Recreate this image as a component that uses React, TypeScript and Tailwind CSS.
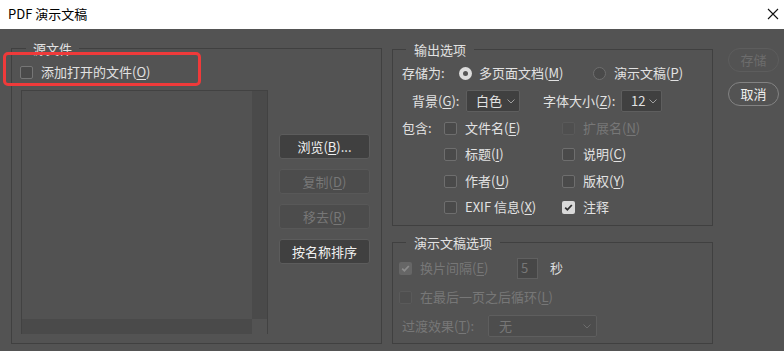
import React from "react";

const U = ({ c }: { c: string }) => (
  <span className="underline underline-offset-[2px] decoration-1">{c}</span>
);

const Check = ({
  checked = false,
  disabled = false,
  light = false,
}: {
  checked?: boolean;
  disabled?: boolean;
  light?: boolean;
}) => {
  if (checked && !disabled) {
    return (
      <span className="w-[13px] h-[13px] rounded-[2px] bg-[#d9d9d9] flex items-center justify-center shrink-0">
        <svg width="9" height="9" viewBox="0 0 9 9">
          <path d="M1.2 4.6 L3.4 6.8 L7.8 2" stroke="#2f2f2f" strokeWidth="1.8" fill="none" />
        </svg>
      </span>
    );
  }
  if (checked && disabled) {
    return (
      <span className="w-[13px] h-[13px] rounded-[2px] bg-[#666666] flex items-center justify-center shrink-0">
        <svg width="9" height="9" viewBox="0 0 9 9">
          <path d="M1.2 4.6 L3.4 6.8 L7.8 2" stroke="#8c8c8c" strokeWidth="1.8" fill="none" />
        </svg>
      </span>
    );
  }
  return (
    <span
      className={
        disabled
          ? "w-[13px] h-[13px] rounded-[2px] border border-[#5a5a5a] bg-[#4f4f4f] shrink-0"
          : light
          ? "w-[13px] h-[13px] rounded-[2px] border border-[#767676] bg-[#4a4a4a] shrink-0"
          : "w-[13px] h-[13px] rounded-[2px] border border-[#6e6e6e] bg-[#4a4a4a] shrink-0"
      }
    />
  );
};

const Radio = ({ on = false }: { on?: boolean }) =>
  on ? (
    <span className="w-[13px] h-[13px] rounded-full bg-[#dcdcdc] flex items-center justify-center shrink-0">
      <span className="w-[5px] h-[5px] rounded-full bg-[#555555]" />
    </span>
  ) : (
    <span className="w-[13px] h-[13px] rounded-full border border-[#6e6e6e] bg-[#4a4a4a] shrink-0" />
  );

const Chevron = ({ color }: { color: string }) => (
  <svg width="8" height="5" viewBox="0 0 8 5">
    <path d="M0.5 0.5 L4 4 L7.5 0.5" stroke={color} strokeWidth="1" fill="none" />
  </svg>
);

export default function App() {
  return (
    <div className="w-[784px] h-[351px] overflow-hidden font-['Noto_Sans_CJK_SC','Noto_Sans',sans-serif] text-[13px] leading-[18px] text-[#e2e2e2]">
      {/* Title bar */}
      <div className="h-[29px] bg-white flex items-center justify-between pl-[8px] pr-[4px] text-black">
        <span className="leading-[16px] -mt-[2px]">PDF 演示文稿</span>
        <svg width="12" height="12" viewBox="0 0 12 12" className="mr-[1px] -mt-[2px]">
          <path d="M1 1 L11 11 M11 1 L1 11" stroke="#111" strokeWidth="1.1" />
        </svg>
      </div>

      {/* Body */}
      <div className="relative flex h-[322px] bg-[#535353]">
        {/* Source group */}
        <div className="ml-[11px] mt-[19px] w-[371px] h-[296px] border border-[#404040] flex flex-col shrink-0">
          <div className="-mt-[10px] ml-[14px] w-fit px-[7px] h-[19px] leading-[19px] bg-[#535353]">源文件</div>
          <div className="mt-[5px] ml-[8px] h-[18px] flex items-center">
            <Check light />
            <span className="ml-[8px]">
              添加打开的文件(<U c="O" />)
            </span>
          </div>
          <div className="mt-[9px] ml-[9px] flex">
            <div className="w-[247px] h-[244px] border-t border-l border-r border-[#424242] grid grid-cols-[1fr_15px] grid-rows-[1fr_15px]">
              <div className="bg-[#525252]" />
              <div className="bg-[#4a4a4a]" />
              <div className="bg-[#4a4a4a]" />
              <div className="bg-[#535353]" />
            </div>
            <div className="ml-[11px] mt-[44px] flex flex-col gap-[10px]">
              <div className="w-[91px] h-[25px] rounded-[3px] border border-[#5c5c5c] bg-[#404040] flex items-center justify-center text-[#f0f0f0]">
                浏览(<U c="B" />)...
              </div>
              <div className="w-[91px] h-[25px] rounded-[3px] border border-[#585858] bg-[#4c4c4c] flex items-center justify-center text-[#777777]">
                复制(<U c="D" />)
              </div>
              <div className="w-[91px] h-[25px] rounded-[3px] border border-[#585858] bg-[#4c4c4c] flex items-center justify-center text-[#777777]">
                移去(<U c="R" />)
              </div>
              <div className="w-[91px] h-[25px] rounded-[3px] border border-[#5c5c5c] bg-[#404040] flex items-center justify-center text-[#f0f0f0]">
                按名称排序
              </div>
            </div>
          </div>
        </div>

        {/* Output column */}
        <div className="ml-[10px] mt-[20px] w-[321px] flex flex-col shrink-0">
          {/* Output options */}
          <div className="h-[177px] border border-[#404040] flex flex-col">
            <div className="-mt-[10px] ml-[13px] w-fit px-[8px] h-[19px] leading-[19px] bg-[#535353]">输出选项</div>
            <div className="mt-[3px] h-[22px] flex items-center pl-[9px]">
              <span className="w-[57px]">存储为:</span>
              <Radio on />
              <span className="ml-[7px] w-[114px]">
                多页面文档(<U c="M" />)
              </span>
              <Radio />
              <span className="ml-[8px]">
                演示文稿(<U c="P" />)
              </span>
            </div>
            <div className="mt-[6px] h-[22px] flex items-center pl-[19px]">
              <span className="w-[54px]">
                背景(<U c="G" />):
              </span>
              <div className="w-[54px] h-[22px] rounded-[2px] border border-[#5e5e5e] bg-[#404040] flex items-center justify-between pl-[9px] pr-[4px]">
                <span>白色</span>
                <Chevron color="#a0a0a0" />
              </div>
              <span className="ml-[23px] w-[78px]">
                字体大小(<U c="Z" />):
              </span>
              <div className="w-[41px] h-[22px] rounded-[2px] border border-[#5e5e5e] bg-[#404040] flex items-center justify-between pl-[9px] pr-[4px]">
                <span>12</span>
                <Chevron color="#a0a0a0" />
              </div>
            </div>
            <div className="mt-[6px] h-[20px] flex items-center pl-[9px]">
              <span className="w-[42px]">包含:</span>
              <div className="w-[118px] flex items-center">
                <Check />
                <span className="ml-[8px]">
                  文件名(<U c="E" />)
                </span>
              </div>
              <div className="flex items-center text-[#777777]">
                <Check disabled />
                <span className="ml-[8px]">
                  扩展名(<U c="N" />)
                </span>
              </div>
            </div>
            <div className="mt-[6px] h-[20px] flex items-center pl-[51px]">
              <div className="w-[118px] flex items-center">
                <Check />
                <span className="ml-[8px]">
                  标题(<U c="I" />)
                </span>
              </div>
              <div className="flex items-center">
                <Check />
                <span className="ml-[8px]">
                  说明(<U c="C" />)
                </span>
              </div>
            </div>
            <div className="mt-[7px] h-[20px] flex items-center pl-[51px]">
              <div className="w-[118px] flex items-center">
                <Check />
                <span className="ml-[8px]">
                  作者(<U c="U" />)
                </span>
              </div>
              <div className="flex items-center">
                <Check />
                <span className="ml-[8px]">
                  版权(<U c="Y" />)
                </span>
              </div>
            </div>
            <div className="mt-[6px] h-[20px] flex items-center pl-[51px]">
              <div className="w-[118px] flex items-center">
                <Check />
                <span className="ml-[8px]">
                  EXIF 信息(<U c="X" />)
                </span>
              </div>
              <div className="flex items-center">
                <Check checked />
                <span className="ml-[8px]">注释</span>
              </div>
            </div>
          </div>

          {/* Slideshow options */}
          <div className="mt-[16px] h-[102px] border border-[#404040] flex flex-col">
            <div className="-mt-[10px] ml-[13px] w-fit px-[8px] h-[19px] leading-[19px] bg-[#535353]">演示文稿选项</div>
            <div className="mt-[5px] h-[22px] flex items-center pl-[6px]">
              <Check checked disabled />
              <span className="ml-[8px] w-[97px] text-[#777777]">
                换片间隔(<U c="E" />)
              </span>
              <div className="w-[21px] h-[21px] border border-[#606060] bg-[#474747] flex items-center pl-[3px] text-[#777777]">
                5
              </div>
              <span className="ml-[12px] text-[#dcdcdc]">秒</span>
            </div>
            <div className="mt-[8px] h-[20px] flex items-center pl-[6px] text-[#777777]">
              <Check disabled />
              <span className="ml-[8px]">
                在最后一页之后循环(<U c="L" />)
              </span>
            </div>
            <div className="mt-[8px] h-[22px] flex items-center pl-[9px] text-[#777777]">
              <span className="w-[86px]">
                过渡效果(<U c="T" />):
              </span>
              <div className="w-[109px] h-[22px] rounded-[2px] border border-[#5e5e5e] bg-[#4d4d4d] flex items-center justify-between pl-[10px] pr-[5px]">
                <span>无</span>
                <Chevron color="#6c6c6c" />
              </div>
            </div>
          </div>
        </div>

        {/* Right buttons */}
        <div className="ml-[15px] mt-[19px] flex flex-col gap-[10px]">
          <div className="w-[51px] h-[24px] rounded-full border border-[#5d5d5d] flex items-center justify-center text-[#6c6c6c]">
            存储
          </div>
          <div className="w-[51px] h-[24px] rounded-full border border-[#838383] flex items-center justify-center text-[#f0f0f0]">
            取消
          </div>
        </div>

        {/* Red annotation highlight */}
        <div className="absolute left-[3px] top-[23px] w-[198px] h-[34px] border-[3px] border-[#ef3a3a] rounded-[5px]" />
      </div>
    </div>
  );
}
